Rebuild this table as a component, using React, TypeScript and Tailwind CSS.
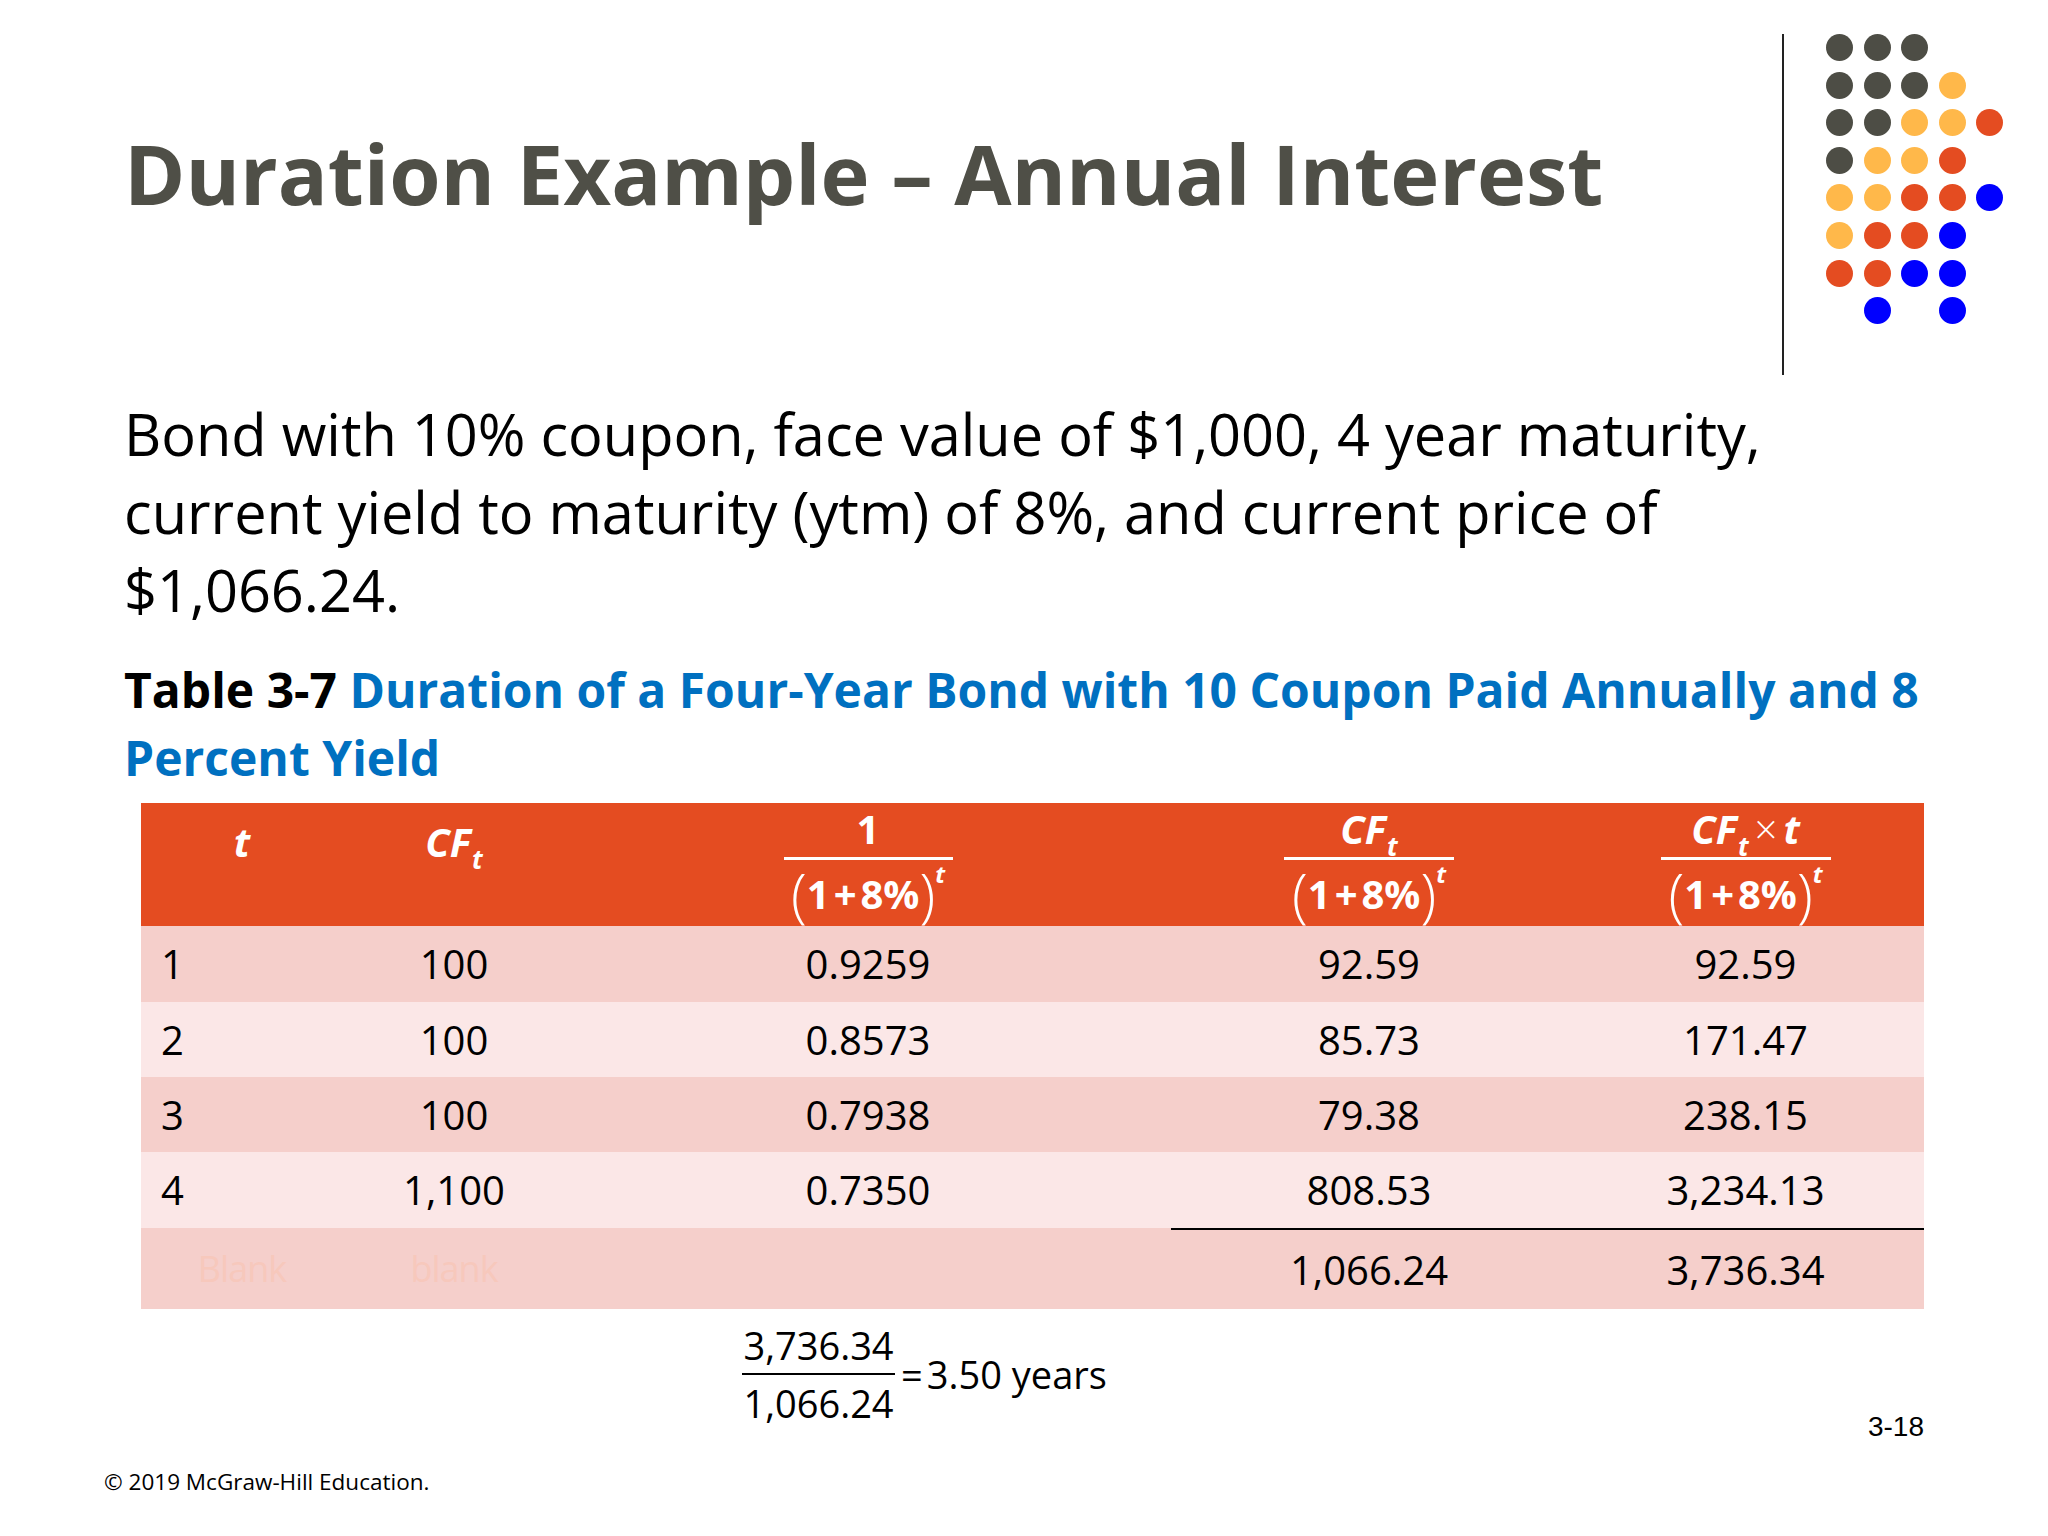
import React from "react";

type Dot = "g" | "y" | "r" | "b" | null;

const dotRows: Dot[][] = [
  ["g", "g", "g", null, null],
  ["g", "g", "g", "y", null],
  ["g", "g", "y", "y", "r"],
  ["g", "y", "y", "r", null],
  ["y", "y", "r", "r", "b"],
  ["y", "r", "r", "b", null],
  ["r", "r", "b", "b", null],
  [null, "b", null, "b", null],
];

const dotColor: Record<string, string> = {
  g: "bg-[#4d4d45]",
  y: "bg-[#ffb84a]",
  r: "bg-[#e44c21]",
  b: "bg-[#0000ff]",
};

type Row = { t: string; cf: string; pv: string; dcf: string; dcft: string };

const rows: Row[] = [
  { t: "1", cf: "100", pv: "0.9259", dcf: "92.59", dcft: "92.59" },
  { t: "2", cf: "100", pv: "0.8573", dcf: "85.73", dcft: "171.47" },
  { t: "3", cf: "100", pv: "0.7938", dcf: "79.38", dcft: "238.15" },
  { t: "4", cf: "1,100", pv: "0.7350", dcf: "808.53", dcft: "3,234.13" },
];

const rowHeights = ["h-[76px]", "h-[75px]", "h-[75px]", "h-[76px]"];

function CF() {
  return (
    <span className="italic font-bold">
      CF<span className="relative top-[12px] ml-[1px] text-[26px]">t</span>
    </span>
  );
}

function Denominator() {
  return (
    <div className="flex h-[56px] items-center leading-none">
      <span className="text-[58px] font-light leading-none">(</span>
      <span className="text-[40px] font-bold">
        1<span className="mx-[4px]">+</span>8%
      </span>
      <span className="text-[58px] font-light leading-none">)</span>
      <span className="relative -top-[20px] text-[24px] font-bold italic">t</span>
    </div>
  );
}

function FractionHeader({ top, width }: { top: React.ReactNode; width: string }) {
  return (
    <div className="flex flex-col items-center pt-[4px]">
      <div className="h-[44px] text-[40px] font-bold leading-[44px]">{top}</div>
      <div className={`mt-[6px] h-[3px] bg-white ${width}`} />
      <div className="mt-[6px]">
        <Denominator />
      </div>
    </div>
  );
}

export default function App() {
  return (
    <div
      className="relative h-[1536px] w-[2048px] overflow-hidden bg-white text-black"
      style={{ fontFamily: '"Open Sans", "Noto Sans", sans-serif' }}
    >
      {/* header */}
      <div className="flex h-[375px]">
        <div className="w-[1782px] pl-[124px] pt-[131px]">
          <h1 className="text-[83px] font-bold leading-[83px] text-[#4f4f47]">
            Duration Example – Annual Interest
          </h1>
        </div>
        <div className="mt-[34px] h-[341px] w-[2px] bg-[#222222]" />
        <div className="ml-[42px] mt-[34px] grid grid-cols-[repeat(5,27px)] gap-x-[10.5px] gap-y-[10.6px] self-start">
          {dotRows.flat().map((d, i) => (
            <div
              key={i}
              className={`h-[27px] w-[27px] rounded-full ${d ? dotColor[d] : "bg-transparent"}`}
            />
          ))}
        </div>
      </div>

      {/* body */}
      <p className="mt-[20px] pl-[124px] text-[57.7px] leading-[78px]">
        Bond with 10% coupon, face value of $1,000, 4 year maturity,
        <br />
        current yield to maturity (ytm) of 8%, and current price of
        <br />
        $1,066.24.
      </p>

      <p className="mt-[27px] pl-[124px] text-[48px] font-bold leading-[68px]">
        <span className="text-black">Table 3-7 </span>
        <span className="text-[#0070c0]">
          Duration of a Four-Year Bond with 10 Coupon Paid Annually and 8
          <br />
          Percent Yield
        </span>
      </p>

      {/* table */}
      <div className="ml-[141px] mt-[11px] w-[1783px] text-[40px]">
        <div className="grid h-[123px] grid-cols-[202px_222px_606px_396px_357px] bg-[#e44c21] text-white">
          <div className="flex justify-center pt-[15px] text-[40px] font-bold italic leading-[48px]">t</div>
          <div className="flex justify-center pt-[15px] text-[40px] leading-[48px]">
            <CF />
          </div>
          <FractionHeader top="1" width="w-[169px]" />
          <FractionHeader top={<CF />} width="w-[170px]" />
          <FractionHeader
            top={
              <span>
                <CF />
                <span className="mx-[6px] font-light">×</span>
                <span className="italic">t</span>
              </span>
            }
            width="w-[170px]"
          />
        </div>
        {rows.map((r, i) => (
          <div
            key={r.t}
            className={`grid grid-cols-[202px_222px_606px_396px_357px] items-center ${rowHeights[i]} ${
              i % 2 === 0 ? "bg-[#f5cfcb]" : "bg-[#fbe7e7]"
            }`}
          >
            <div className="pl-[20px]">{r.t}</div>
            <div className="text-center">{r.cf}</div>
            <div className="text-center">{r.pv}</div>
            <div className="text-center">{r.dcf}</div>
            <div className="text-center">{r.dcft}</div>
          </div>
        ))}
        <div className="grid h-[81px] grid-cols-[202px_222px_606px_396px_357px] items-center bg-[#f5cfcb]">
          <div className="text-center text-[36px] tracking-[-1px] text-[#f7c8bc]">Blank</div>
          <div className="text-center text-[36px] tracking-[-1px] text-[#f7c8bc]">blank</div>
          <div />
          <div className="flex h-full items-center justify-center border-t-2 border-black">1,066.24</div>
          <div className="flex h-full items-center justify-center border-t-2 border-black">3,736.34</div>
        </div>
      </div>

      {/* result */}
      <div className="mt-[8px] flex w-[1924px] items-start pl-[742px]">
        <div className="flex items-center text-[38px]">
          <div className="flex w-[153px] flex-col items-center">
            <div className="leading-[56px]">3,736.34</div>
            <div className="h-[2px] w-full bg-black" />
            <div className="leading-[56px]">1,066.24</div>
          </div>
          <span className="ml-[6px]">
            =<span className="ml-[4px]">3.50 years</span>
          </span>
        </div>
        <div
          className="ml-auto mt-[92px] text-[28px] leading-[36px]"
          style={{ fontFamily: '"Liberation Sans", Arial, sans-serif' }}
        >
          3-18
        </div>
      </div>

      <div className="mt-[22px] pl-[104px] text-[22.5px] leading-[30px]">© 2019 McGraw-Hill Education.</div>
    </div>
  );
}
